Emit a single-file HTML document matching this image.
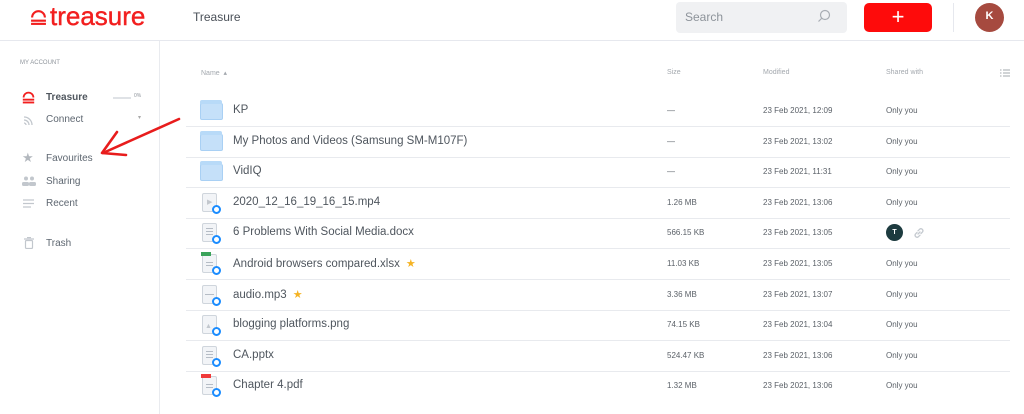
<!DOCTYPE html>
<html><head><meta charset="utf-8"><style>
*{margin:0;padding:0;box-sizing:border-box}
body{width:1024px;height:414px;overflow:hidden;background:#fff;font-family:"Liberation Sans",sans-serif;color:#555b63;position:relative}
.a{position:absolute}
.hdr{left:0;top:0;width:1024px;height:41px;border-bottom:1px solid #e6e8ee}
.side{left:159px;top:41px;width:1px;height:373px;background:#e9ebef}
.nav{font-size:10px;color:#5d6670}
.row{position:absolute;left:186px;width:824px;height:31px;border-bottom:1px solid #e8eaee}
.nm{position:absolute;left:47px;top:8px;font-size:11.5px;color:#4f565e;white-space:nowrap}
.sz{position:absolute;left:481px;top:10px;font-size:8px;color:#5b6168}
.md{position:absolute;left:577px;top:10px;font-size:8px;color:#5b6168}
.sh{position:absolute;left:700px;top:10px;font-size:8px;color:#5b6168}
.fold{position:absolute;left:14px;top:7px;width:23px;height:17px;background:#c5e0f9;border:1px solid #a9d0f4;border-radius:2px}
.fold:before{content:"";position:absolute;left:-1px;top:-4px;width:22px;height:4px;background:#b8daf8;border-radius:2px 2px 0 0}
.doc{position:absolute;left:16px;top:5px;width:15px;height:19px;background:#f2f4f7;border:1px solid #cfd5dc;border-radius:2px}
.doc i{position:absolute;left:3px;height:1px;width:7px;background:#b5bcc5}
.dot{position:absolute;left:26px;top:17px;width:9px;height:9px;border-radius:50%;border:2.5px solid #1a8cff;background:#fff}
.tag{position:absolute;left:15px;top:3px;width:10px;height:4px}
.star{color:#f5b323;font-size:11px;margin-left:6px}
</style></head><body>
<div class="a hdr"></div>
<div class="a side"></div>
<!-- logo -->
<svg class="a" style="left:30px;top:9px" width="17" height="17" viewBox="0 0 16 16"><path d="M2 8a6 6 0 0 1 12 0" fill="none" stroke="#f21f1f" stroke-width="2"/><rect x="1" y="10" width="14" height="2" fill="#f21f1f"/><rect x="1" y="13" width="14" height="2" fill="#f21f1f"/></svg>
<div class="a" style="left:50px;top:1px;font-size:26px;color:#f21f1f;letter-spacing:0px;-webkit-text-stroke:0.4px #f21f1f">treasure</div>
<div class="a" style="left:193px;top:10px;font-size:12px;color:#4a5058">Treasure</div>
<div class="a" style="left:676px;top:2px;width:171px;height:31px;background:#f0f1f3;border-radius:4px"></div>
<div class="a" style="left:685px;top:10px;font-size:12px;color:#8d939a">Search</div>
<svg class="a" style="left:817px;top:9px" width="14" height="14"><circle cx="8" cy="6" r="4.5" fill="none" stroke="#a8adb3" stroke-width="1.2"/><path d="M5 9L1.5 12.5" stroke="#a8adb3" stroke-width="1.2"/></svg>
<div class="a" style="left:864px;top:3px;width:68px;height:29px;background:#fe0b0b;border-radius:5px;color:#fff;font-size:22px;text-align:center;line-height:27px">+</div>
<div class="a" style="left:953px;top:3px;width:1px;height:29px;background:#e6e8ee"></div>
<div class="a" style="left:975px;top:3px;width:29px;height:29px;border-radius:50%;background:#a64a3f;color:#fff;font-size:11px;font-weight:bold;text-align:center;line-height:27px">K</div>
<!-- sidebar -->
<div class="a" style="left:20px;top:60px;font-size:6px;color:#8e949b">MY ACCOUNT</div>
<svg class="a" style="left:22px;top:91px" width="13" height="13" viewBox="0 0 16 16"><path d="M2 8a6 6 0 0 1 12 0" fill="none" stroke="#f21f1f" stroke-width="2.2"/><rect x="1" y="9.5" width="14" height="2.3" fill="#f21f1f"/><rect x="1" y="13" width="14" height="2.3" fill="#f21f1f"/></svg>
<div class="a nav" style="left:46px;top:92px;font-weight:bold;color:#4f565e">Treasure</div>
<div class="a" style="left:113px;top:97px;width:18px;height:2px;background:#dfe2e6"></div>
<div class="a" style="left:134px;top:93px;font-size:5px;color:#8e949b">0%</div>
<svg class="a" style="left:23px;top:114px" width="12" height="12"><path d="M1 3a8 8 0 0 1 8 8M1 6a5 5 0 0 1 5 5M1 9a2 2 0 0 1 2 2" fill="none" stroke="#c2c7cd" stroke-width="1.3"/></svg>
<div class="a nav" style="left:46px;top:114px">Connect</div>
<div class="a" style="left:138px;top:114px;font-size:6px;color:#aaa">▾</div>
<div class="a" style="left:22px;top:150px;font-size:13px;color:#b3b8be">★</div>
<div class="a nav" style="left:46px;top:153px">Favourites</div>
<svg class="a" style="left:22px;top:176px" width="14" height="10"><circle cx="4" cy="2.5" r="2" fill="#c2c7cd"/><circle cx="10" cy="2.5" r="2" fill="#c2c7cd"/><rect x="0" y="6" width="7" height="4" rx="1.5" fill="#c2c7cd"/><rect x="7" y="6" width="7" height="4" rx="1.5" fill="#c2c7cd"/></svg>
<div class="a nav" style="left:46px;top:176px">Sharing</div>
<svg class="a" style="left:23px;top:199px" width="11" height="9"><path d="M0 1h11M0 4.5h11M0 8h8" stroke="#c2c7cd" stroke-width="1.3"/></svg>
<div class="a nav" style="left:46px;top:198px">Recent</div>
<svg class="a" style="left:24px;top:237px" width="10" height="12"><path d="M0 2h10M3 0.5h4" stroke="#c2c7cd" stroke-width="1.2"/><rect x="1.5" y="3.5" width="7" height="8" rx="1" fill="none" stroke="#c2c7cd" stroke-width="1.2"/></svg>
<div class="a nav" style="left:46px;top:238px">Trash</div>
<!-- arrow -->
<svg class="a" style="left:95px;top:115px" width="90" height="45"><path d="M84 4L8 38" stroke="#e81c1c" stroke-width="2.6" fill="none" stroke-linecap="round"/><path d="M22 17L7 38L31 40" stroke="#e81c1c" stroke-width="2.6" fill="none" stroke-linecap="round" stroke-linejoin="round"/></svg>
<!-- table header -->
<div class="a" style="left:201px;top:69px;font-size:7px;color:#a3a8ae">Name &nbsp;▴</div>
<div class="a" style="left:667px;top:69px;font-size:7px;color:#a3a8ae">Size</div>
<div class="a" style="left:763px;top:69px;font-size:7px;color:#a3a8ae">Modified</div>
<div class="a" style="left:886px;top:69px;font-size:7px;color:#a3a8ae">Shared with</div>
<svg class="a" style="left:1000px;top:69px" width="10" height="8"><path d="M0 1h1.5M0 4h1.5M0 7h1.5M3 1h7M3 4h7M3 7h7" stroke="#a3a8ae" stroke-width="1"/></svg>
<!-- rows -->
<div class="row" style="top:96px"><div class="fold"></div><div class="nm">KP</div><div class="sz">—</div><div class="md">23 Feb 2021, 12:09</div><div class="sh">Only you</div></div>
<div class="row" style="top:127px"><div class="fold"></div><div class="nm">My Photos and Videos (Samsung SM-M107F)</div><div class="sz">—</div><div class="md">23 Feb 2021, 13:02</div><div class="sh">Only you</div></div>
<div class="row" style="top:157px"><div class="fold"></div><div class="nm">VidIQ</div><div class="sz">—</div><div class="md">23 Feb 2021, 11:31</div><div class="sh">Only you</div></div>
<div class="row" style="top:188px"><div class="doc"><span style="position:absolute;left:4px;top:4px;font-size:7px;color:#c2c7cd">▶</span></div><div class="dot"></div><div class="nm">2020_12_16_19_16_15.mp4</div><div class="sz">1.26 MB</div><div class="md">23 Feb 2021, 13:06</div><div class="sh">Only you</div></div>
<div class="row" style="top:218px"><div class="doc"><i style="top:4px"></i><i style="top:7px"></i><i style="top:10px"></i></div><div class="dot"></div><div class="nm">6 Problems With Social Media.docx</div><div class="sz">566.15 KB</div><div class="md">23 Feb 2021, 13:05</div><div class="sh" style="top:6px;left:700px;width:17px;height:17px;border-radius:50%;background:#1d3b3f;color:#fff;font-weight:bold;font-size:7px;text-align:center;line-height:17px">T</div><svg class="a" style="left:727px;top:9px" width="12" height="12"><path d="M5 7L7 5M4 5.5L2.5 7a2 2 0 0 0 2.8 2.8L7 8.2M8 6.5L9.5 5a2 2 0 0 0-2.8-2.8L5 3.8" fill="none" stroke="#c5cad0" stroke-width="1.3" stroke-linecap="round"/></svg></div>
<div class="row" style="top:249px"><div class="doc"><i style="top:7px"></i><i style="top:10px"></i></div><div class="tag" style="background:#3aa35a"></div><div class="dot"></div><div class="nm">Android browsers compared.xlsx<span class="star">★</span></div><div class="sz">11.03 KB</div><div class="md">23 Feb 2021, 13:05</div><div class="sh">Only you</div></div>
<div class="row" style="top:280px"><div class="doc"><i style="top:8px;left:2px;width:9px"></i></div><div class="dot"></div><div class="nm">audio.mp3<span class="star">★</span></div><div class="sz">3.36 MB</div><div class="md">23 Feb 2021, 13:07</div><div class="sh">Only you</div></div>
<div class="row" style="top:310px"><div class="doc"><span style="position:absolute;left:2px;top:7px;font-size:7px;color:#c2c7cd">▲</span></div><div class="dot"></div><div class="nm">blogging platforms.png</div><div class="sz">74.15 KB</div><div class="md">23 Feb 2021, 13:04</div><div class="sh">Only you</div></div>
<div class="row" style="top:341px"><div class="doc"><i style="top:4px"></i><i style="top:7px"></i><i style="top:10px"></i></div><div class="dot"></div><div class="nm">CA.pptx</div><div class="sz">524.47 KB</div><div class="md">23 Feb 2021, 13:06</div><div class="sh">Only you</div></div>
<div class="row" style="top:371px;border-bottom:none"><div class="doc"><i style="top:7px"></i><i style="top:10px"></i></div><div class="tag" style="background:#f03a3a"></div><div class="dot"></div><div class="nm">Chapter 4.pdf</div><div class="sz">1.32 MB</div><div class="md">23 Feb 2021, 13:06</div><div class="sh">Only you</div></div>
</body></html>
